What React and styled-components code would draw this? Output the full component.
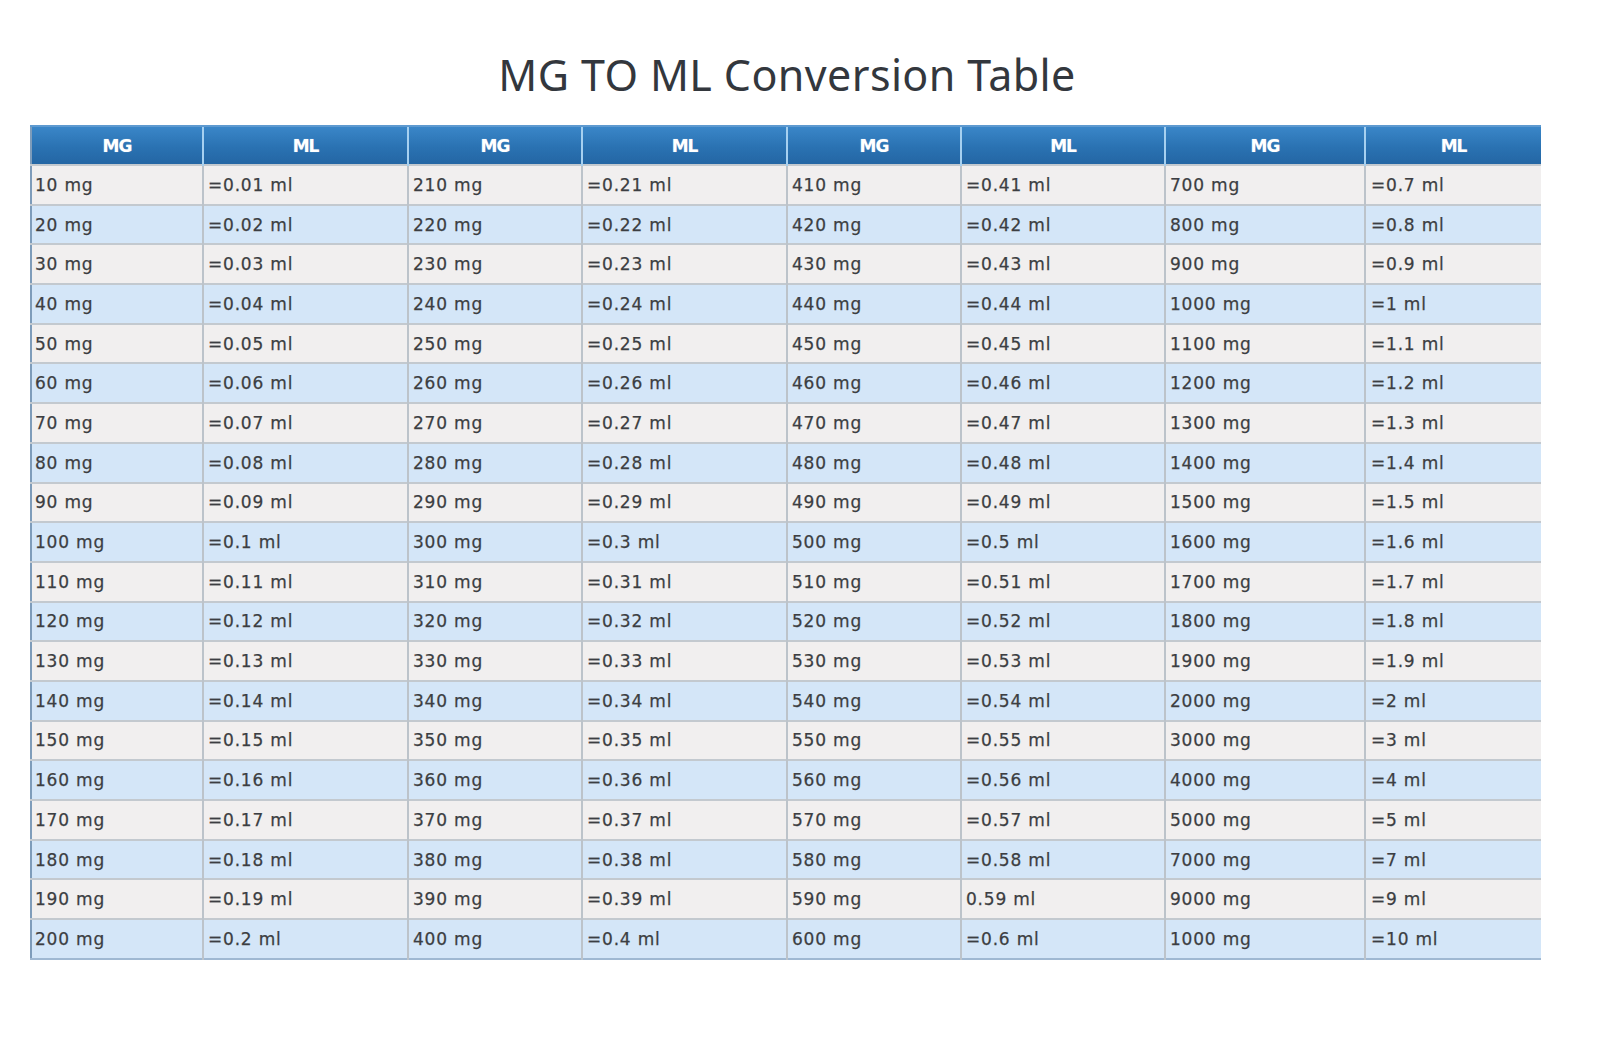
import React from 'react'
import styled, { createGlobalStyle } from 'styled-components'

const GlobalStyle = createGlobalStyle`
  html, body {
    margin: 0;
    padding: 0;
    background: #ffffff;
  }
`

const Page = styled.div`
  width: 1600px;
  height: 1040px;
  padding-top: 49px;
  box-sizing: border-box;
  font-family: "DejaVu Sans", "Liberation Sans", sans-serif;
`

const Title = styled.h1`
  margin: 0 0 24px 0;
  text-align: center;
  font-family: "Noto Sans", "Open Sans", sans-serif;
  font-weight: 400;
  font-size: 43px;
  line-height: 52px;
  letter-spacing: 0.4px;
  color: #33373d;
  padding-right: 26px;
`

const Table = styled.table`
  margin-left: 30px;
  width: 1510px;
  border-collapse: collapse;
  table-layout: fixed;
  border-left: 2px solid #7e9cba;
  border-bottom: 2px solid #9fb8d2;
`

const HeadCell = styled.th`
  height: 37px;
  padding: 0;
  background: linear-gradient(#3a86c8, #2a72b2 55%, #2466a4);
  color: #ffffff;
  font-family: "DejaVu Sans", sans-serif;
  font-weight: bold;
  font-size: 17px;
  letter-spacing: -1px;
  text-shadow: 0 0 1px rgba(255, 255, 255, 0.5);
  border-left: 2px solid #a6d0f0;
  border-top: 2px solid #5e9ad0;
  &:first-child {
    border-left: none;
  }
`

const Row = styled.tr`
  height: 39.7px;
  background: ${props => (props.$alt ? '#d4e6f8' : '#f1efef')};
`

const Cell = styled.td`
  padding: 0 0 0 4px;
  font-size: 17px;
  letter-spacing: 0.8px;
  color: #3c3e42;
  -webkit-text-stroke: 0.25px #3c3e42;
  white-space: nowrap;
  border-top: 2px solid #c3c9cf;
  border-left: 2px solid #bcc3ca;
  &:first-child {
    border-left: none;
    padding-left: 3px;
  }
  &:last-child {
    padding-left: 5px;
  }
`

const widths = [172, 205, 174, 205, 174, 204, 200, 176]
const heads = ['MG', 'ML', 'MG', 'ML', 'MG', 'ML', 'MG', 'ML']

const bigMg = [
  700, 800, 900, 1000, 1100, 1200, 1300, 1400, 1500, 1600,
  1700, 1800, 1900, 2000, 3000, 4000, 5000, 7000, 9000, 1000,
]
const bigMl = [
  '0.7', '0.8', '0.9', '1', '1.1', '1.2', '1.3', '1.4', '1.5', '1.6',
  '1.7', '1.8', '1.9', '2', '3', '4', '5', '7', '9', '10',
]

function ml(n) {
  // 10 mg -> 0.01 ml
  return String(Number((n / 1000).toFixed(2)))
}

const rows = bigMg.map((big, i) => {
  let a = (i + 1) * 10
  let b = a + 200
  let c = a + 400
  let cMl = '=' + ml(c) + ' ml'
  if (c === 590) cMl = '0.59 ml'
  return [
    a + ' mg', '=' + ml(a) + ' ml',
    b + ' mg', '=' + ml(b) + ' ml',
    c + ' mg', cMl,
    big + ' mg', '=' + bigMl[i] + ' ml',
  ]
})

export default function App() {
  return (
    <Page>
      <GlobalStyle />
      <Title>MG TO ML Conversion Table</Title>
      <Table>
        <colgroup>
          {widths.map((w, i) => <col key={i} style={{ width: w + 'px' }} />)}
        </colgroup>
        <thead>
          <tr>
            {heads.map((h, i) => <HeadCell key={i}>{h}</HeadCell>)}
          </tr>
        </thead>
        <tbody>
          {rows.map((r, i) => (
            <Row key={i} $alt={i % 2 === 1}>
              {r.map((t, j) => <Cell key={j}>{t}</Cell>)}
            </Row>
          ))}
        </tbody>
      </Table>
    </Page>
  )
}
